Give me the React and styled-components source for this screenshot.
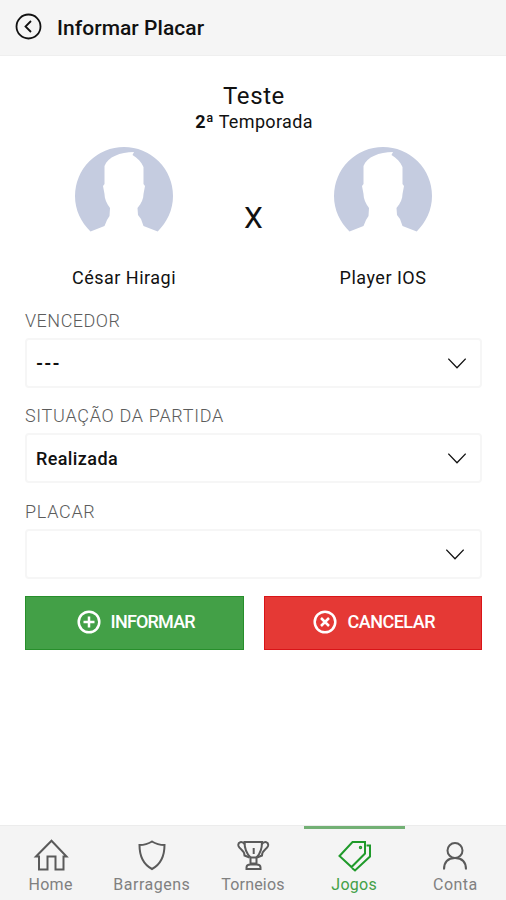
import React from "react";
import styled, { createGlobalStyle } from "styled-components";

const GlobalStyle = createGlobalStyle`
    * {
        box-sizing: border-box;
    }

    body {
        margin: 0;
        background: #fff;
        color: #111;
        font-family: Roboto, "Liberation Sans", sans-serif;
    }
`;

const Screen = styled.div`
    display: flex;
    flex-direction: column;
    height: 900px;
    overflow: hidden;
`;

const Header = styled.header`
    display: flex;
    align-items: center;
    gap: 15px;
    height: 56px;
    padding: 0 0 2px 15px;
    background: #f5f5f5;
    border-bottom: 1px solid #efefef;

    h1 {
        margin: 3px 0 0;
        font-size: 21px;
        font-weight: 500;
        letter-spacing: 0.05px;
    }
`;

const Content = styled.main`
    flex: 1;
    padding: 26px 24px 0 25px;
`;

const Title = styled.div`
    text-align: center;
    padding-left: 1px;

    h2 {
        margin: 0;
        font-size: 24px;
        font-weight: 400;
        line-height: 28px;
        letter-spacing: 0.6px;
    }

    p {
        margin: 0;
        font-size: 18px;
        line-height: 23px;
        letter-spacing: 0.35px;
    }
`;

const Match = styled.div`
    display: grid;
    grid-template-columns: 198px 61px 198px;
    height: 177px;
    padding-top: 14px;
`;

const Player = styled.div`
    display: flex;
    flex-direction: column;
    align-items: center;
    font-size: 18px;
    line-height: 22px;
    letter-spacing: 0.5px;

    svg {
        margin-bottom: 32px;
    }
`;

const Versus = styled.div`
    padding-top: 51px;
    font-size: 30px;
    line-height: 40px;
    text-align: center;
`;

const Field = styled.div`
    height: 95.3px;
`;

const Label = styled.div`
    height: 28px;
    color: #5c5c5c;
    font-size: 18px;
    font-weight: 300;
    line-height: 22px;
    letter-spacing: ${(props) => props.$tracking || "0.7px"};
`;

const Select = styled.div`
    display: flex;
    align-items: center;
    justify-content: space-between;
    height: 50px;
    padding: 0 ${(props) => props.$inset || "14px"} 0 9px;
    border: 2px solid #f6f6f6;
    border-radius: 4px;
    font-size: 18px;
    font-weight: ${(props) => props.$weight || 500};
    letter-spacing: ${(props) => props.$tracking || "0.4px"};
`;

const Actions = styled.div`
    display: grid;
    grid-template-columns: 1fr 1fr;
    gap: 20px;
`;

const Button = styled.button`
    display: flex;
    align-items: center;
    justify-content: center;
    gap: 10px;
    height: 54px;
    padding: 0 0 2px 3px;
    border: 1px solid ${(props) => props.$edge};
    background: ${(props) => props.$color};
    color: #fff;
    font: 500 18px Roboto, "Liberation Sans", sans-serif;
    letter-spacing: ${(props) => props.$tracking};
`;

const TabBar = styled.nav`
    display: grid;
    grid-template-columns: repeat(5, 1fr);
    height: 75px;
    background: #f4f4f4;
    border-top: 1px solid #ececec;
`;

const Tab = styled.div`
    display: flex;
    flex-direction: column;
    align-items: center;
    padding-top: 8px;
    border-top: 3px solid ${(props) => (props.$active ? "#72b074" : "transparent")};
    color: ${(props) => (props.$active ? "#43a047" : "#808080")};
    font-size: 16px;
    line-height: 20px;
    letter-spacing: ${(props) => props.$tracking};

    svg {
        margin-bottom: 2px;
        color: ${(props) => (props.$active ? "#1f9a2a" : "#5a5a5a")};
    }
`;

const Stroke = ({ size = 36, width = 2, children }) => (
    <svg
        width={size}
        height={size}
        viewBox={`0 0 ${size} ${size}`}
        fill="none"
        stroke="currentColor"
        strokeWidth={width}
    >
        {children}
    </svg>
);

const Avatar = () => (
    <svg width="98" height="88" viewBox="0 0 98 88">
        <path
            fill="#c5cce0"
            d="M15.500 84.500C6 75 0 63 0 49a49 49 0 0 1 98 0c0 14-6 26-15.300 35.500L68.500 79 66 72l-3-4-.5-7c4-5 6-9 6-14l1.500-8-1.500-2V20c-2-5-6-9-11-12l1.500-3C45 5 33 10 29.500 19v18L28 39l1.500 8c0 5 2 9 5.500 14l-.5 8-2.500 4-2.500 6Z"
        />
    </svg>
);

const Chevron = () => (
    <Stroke size={18} width={1.3}>
        <path d="M0.300 4.700 9 13.700 17.700 4.700" />
    </Stroke>
);

const tabs = [
    {
        name: "Home",
        tracking: "0.3px",
        icon: <path d="M3 19.500 18.500 3.800 33.500 19.500H30.500V32.500H22.500V19.500H14.500V32.500H6V19.500Z" />,
    },
    {
        name: "Barragens",
        tracking: "0.5px",
        icon: <path d="M18 4.500c-4 2.500-8.500 3.500-12.500 3.500 0 12 4 19.500 12.500 24 8.500-4.500 12.500-12 12.500-24-4 0-8.500-1-12.500-3.500Z" />,
    },
    {
        name: "Torneios",
        tracking: "0.2px",
        icon: (
            <>
                <path d="M9.500 5h17.500c0 8-2 12-5.500 15.500v6h-6v-6C12 17 9.500 13 9.500 5ZM11.500 32v-1.500c0-2 1.500-3 4-3h6c2.500 0 4 1 4 3V32Z" />
                <path d="M10 7.500C7 3.500 2.500 5 3.500 9c1 3.500 6 4 6 9.500l5 2M26.500 7.500c3-4 7.500-2.500 6.500 1.500-1 3.500-6 4-6 9.500l-5 2M15.500 20.500h6" />
                <path d="M18.700 11v6" />
            </>
        ),
    },
    {
        name: "Jogos",
        tracking: "0.3px",
        active: true,
        icon: (
            <>
                <path d="M16.500 5H29v11.500L15.500 30 3.500 19Z" />
                <path d="M30.500 8.500h3.500v11L19 33.500l-3-2.500" />
                <circle cx="24.500" cy="10.500" r="0.700" />
            </>
        ),
    },
    {
        name: "Conta",
        tracking: "0.5px",
        icon: (
            <>
                <circle cx="18" cy="13.500" r="7.500" />
                <path d="M7 32.500C7 25 11 21 18 21s11 4 11 11.500" />
            </>
        ),
    },
];

const App = () => {
    return (
        <Screen>
            <GlobalStyle />
            <Header>
                <Stroke size={27} width={1.8}>
                    <circle cx="13.500" cy="13.500" r="12" />
                    <path d="m16 8-5.500 5.500L16 19" />
                </Stroke>
                <h1>Informar Placar</h1>
            </Header>
            <Content>
                <Title>
                    <h2>Teste</h2>
                    <p>
                        <b>2ª</b> Temporada
                    </p>
                </Title>
                <Match>
                    <Player>
                        <Avatar />
                        <span>César Hiragi</span>
                    </Player>
                    <Versus>X</Versus>
                    <Player>
                        <Avatar />
                        <span>Player IOS</span>
                    </Player>
                </Match>
                <Field>
                    <Label $tracking="0.5px">VENCEDOR</Label>
                    <Select $weight={700} $tracking="1.2px">
                        <span>---</span>
                        <Chevron />
                    </Select>
                </Field>
                <Field>
                    <Label>SITUAÇÃO DA PARTIDA</Label>
                    <Select>
                        <span>Realizada</span>
                        <Chevron />
                    </Select>
                </Field>
                <Field>
                    <Label>PLACAR</Label>
                    <Select $inset="16px">
                        <span />
                        <Chevron />
                    </Select>
                </Field>
                <Actions>
                    <Button $color="#43a047" $edge="#278f2b" $tracking="-0.8px">
                        <Stroke size={24} width={2.5}>
                            <circle cx="12" cy="12" r="10.300" />
                            <path d="M12 6.500v11M6.500 12h11" />
                        </Stroke>
                        INFORMAR
                    </Button>
                    <Button $color="#e53935" $edge="#d91418" $tracking="-0.5px">
                        <Stroke size={24} width={2.5}>
                            <circle cx="12" cy="12" r="10.300" />
                            <path d="m8 8 8 8M16 8l-8 8" />
                        </Stroke>
                        CANCELAR
                    </Button>
                </Actions>
            </Content>
            <TabBar>
                {tabs.map((tab) => (
                    <Tab key={tab.name} $active={tab.active} $tracking={tab.tracking}>
                        <Stroke>{tab.icon}</Stroke>
                        {tab.name}
                    </Tab>
                ))}
            </TabBar>
        </Screen>
    );
};

export default App;
